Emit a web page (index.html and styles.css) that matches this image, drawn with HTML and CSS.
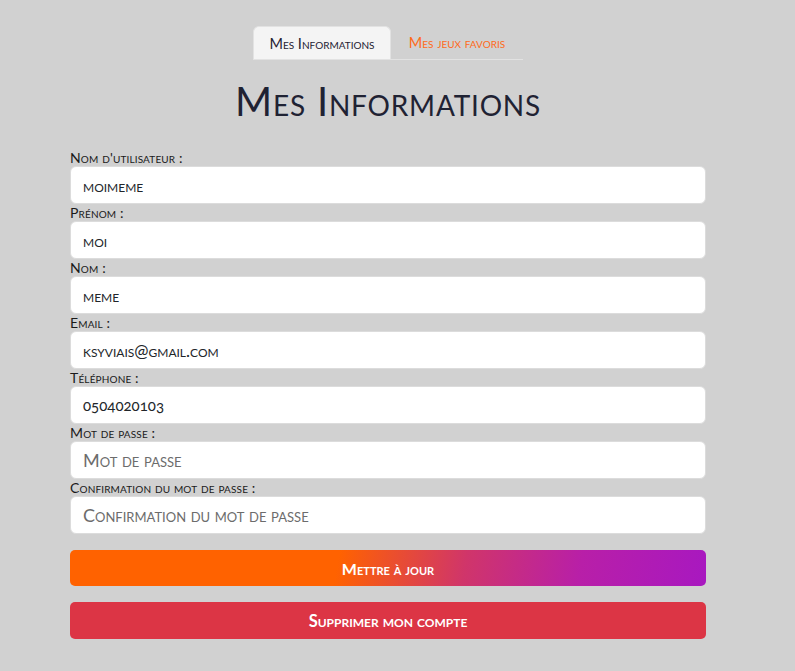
FILE: index.html
```html
<!DOCTYPE html>
<html lang="fr">
<head>
<meta charset="utf-8">
<link rel="stylesheet" href="styles.css">
</head>
<body>
<div class="page">
  <ul class="tabs">
    <li class="tab active">Mes Informations</li>
    <li class="tab other">Mes jeux favoris</li>
  </ul>
  <h1 class="title">Mes Informations</h1>
  <form class="form">
    <label class="lbl">Nom d'utilisateur :</label>
    <div class="inp">moimeme</div>
    <label class="lbl">Prénom :</label>
    <div class="inp">moi</div>
    <label class="lbl">Nom :</label>
    <div class="inp">meme</div>
    <label class="lbl">Email :</label>
    <div class="inp">ksyviais@gmail.com</div>
    <label class="lbl">Téléphone :</label>
    <div class="inp num">0504020103</div>
    <label class="lbl">Mot de passe :</label>
    <div class="inp ph">Mot de passe</div>
    <label class="lbl">Confirmation du mot de passe :</label>
    <div class="inp ph">Confirmation du mot de passe</div>
    <div class="btn update">Mettre à jour</div>
    <div class="btn delete">Supprimer mon compte</div>
  </form>
</div>
</body>
</html>
```
FILE: styles.css
```css
html, body {
  margin: 0;
  padding: 0;
  background: #d1d1d1;
}
body {
  font-family: "Lato", "Open Sans", sans-serif;
  font-variant: small-caps;
  color: #212529;
}
.page {
  width: 776px;
  padding-top: 26px;
}
.tabs {
  list-style: none;
  margin: 0 auto;
  padding: 0;
  width: 270px;
  display: flex;
  border-bottom: 1px solid #e2e2e2;
}
.tab {
  height: 33px;
  box-sizing: border-box;
  display: flex;
  align-items: center;
  justify-content: center;
  font-size: 14.5px;
}
.tab.active {
  width: 138px;
  background: #f4f4f4;
  border: 1px solid #e2e2e2;
  border-bottom: none;
  border-radius: 6px 6px 0 0;
  color: #1f2233;
}
.tab.other {
  width: 132px;
  color: #ff6a1a;
}
.title {
  margin: 21px 0 0;
  text-align: center;
  font-weight: 400;
  font-size: 40px;
  line-height: 40px;
  color: #1f2233;
  letter-spacing: 0.8px;
}
.form {
  margin: 28px 70px 0;
  display: flex;
  flex-direction: column;
}
.lbl {
  font-size: 14px;
  line-height: 17px;
  height: 17px;
  letter-spacing: 0.15px;
  color: #1a1a1a;
}
.inp {
  height: 38px;
  box-sizing: border-box;
  background: #fff;
  border: 1px solid #dcdcdc;
  border-radius: 6px;
  padding: 0 12px;
  display: flex;
  align-items: center;
  font-size: 17px;
  color: #212529;
}
.inp.num {
  font-size: 15px;
  font-variant-numeric: oldstyle-nums;
}
.inp.ph {
  color: #6c6c6c;
  font-size: 18px;
}
.btn {
  height: 36px;
  border-radius: 5px;
  display: flex;
  align-items: center;
  justify-content: center;
  color: #fff;
  font-weight: 700;
  font-size: 16px;
}
.update {
  margin-top: 16px;
  background: linear-gradient(100deg, #ff6200 0%, #ff6200 42%, #d0356a 62%, #b81fa8 80%, #a818c0 100%);
}
.delete {
  margin-top: 16px;
  height: 37px;
  font-size: 16.5px;
  background: #dc3545;
}
```
